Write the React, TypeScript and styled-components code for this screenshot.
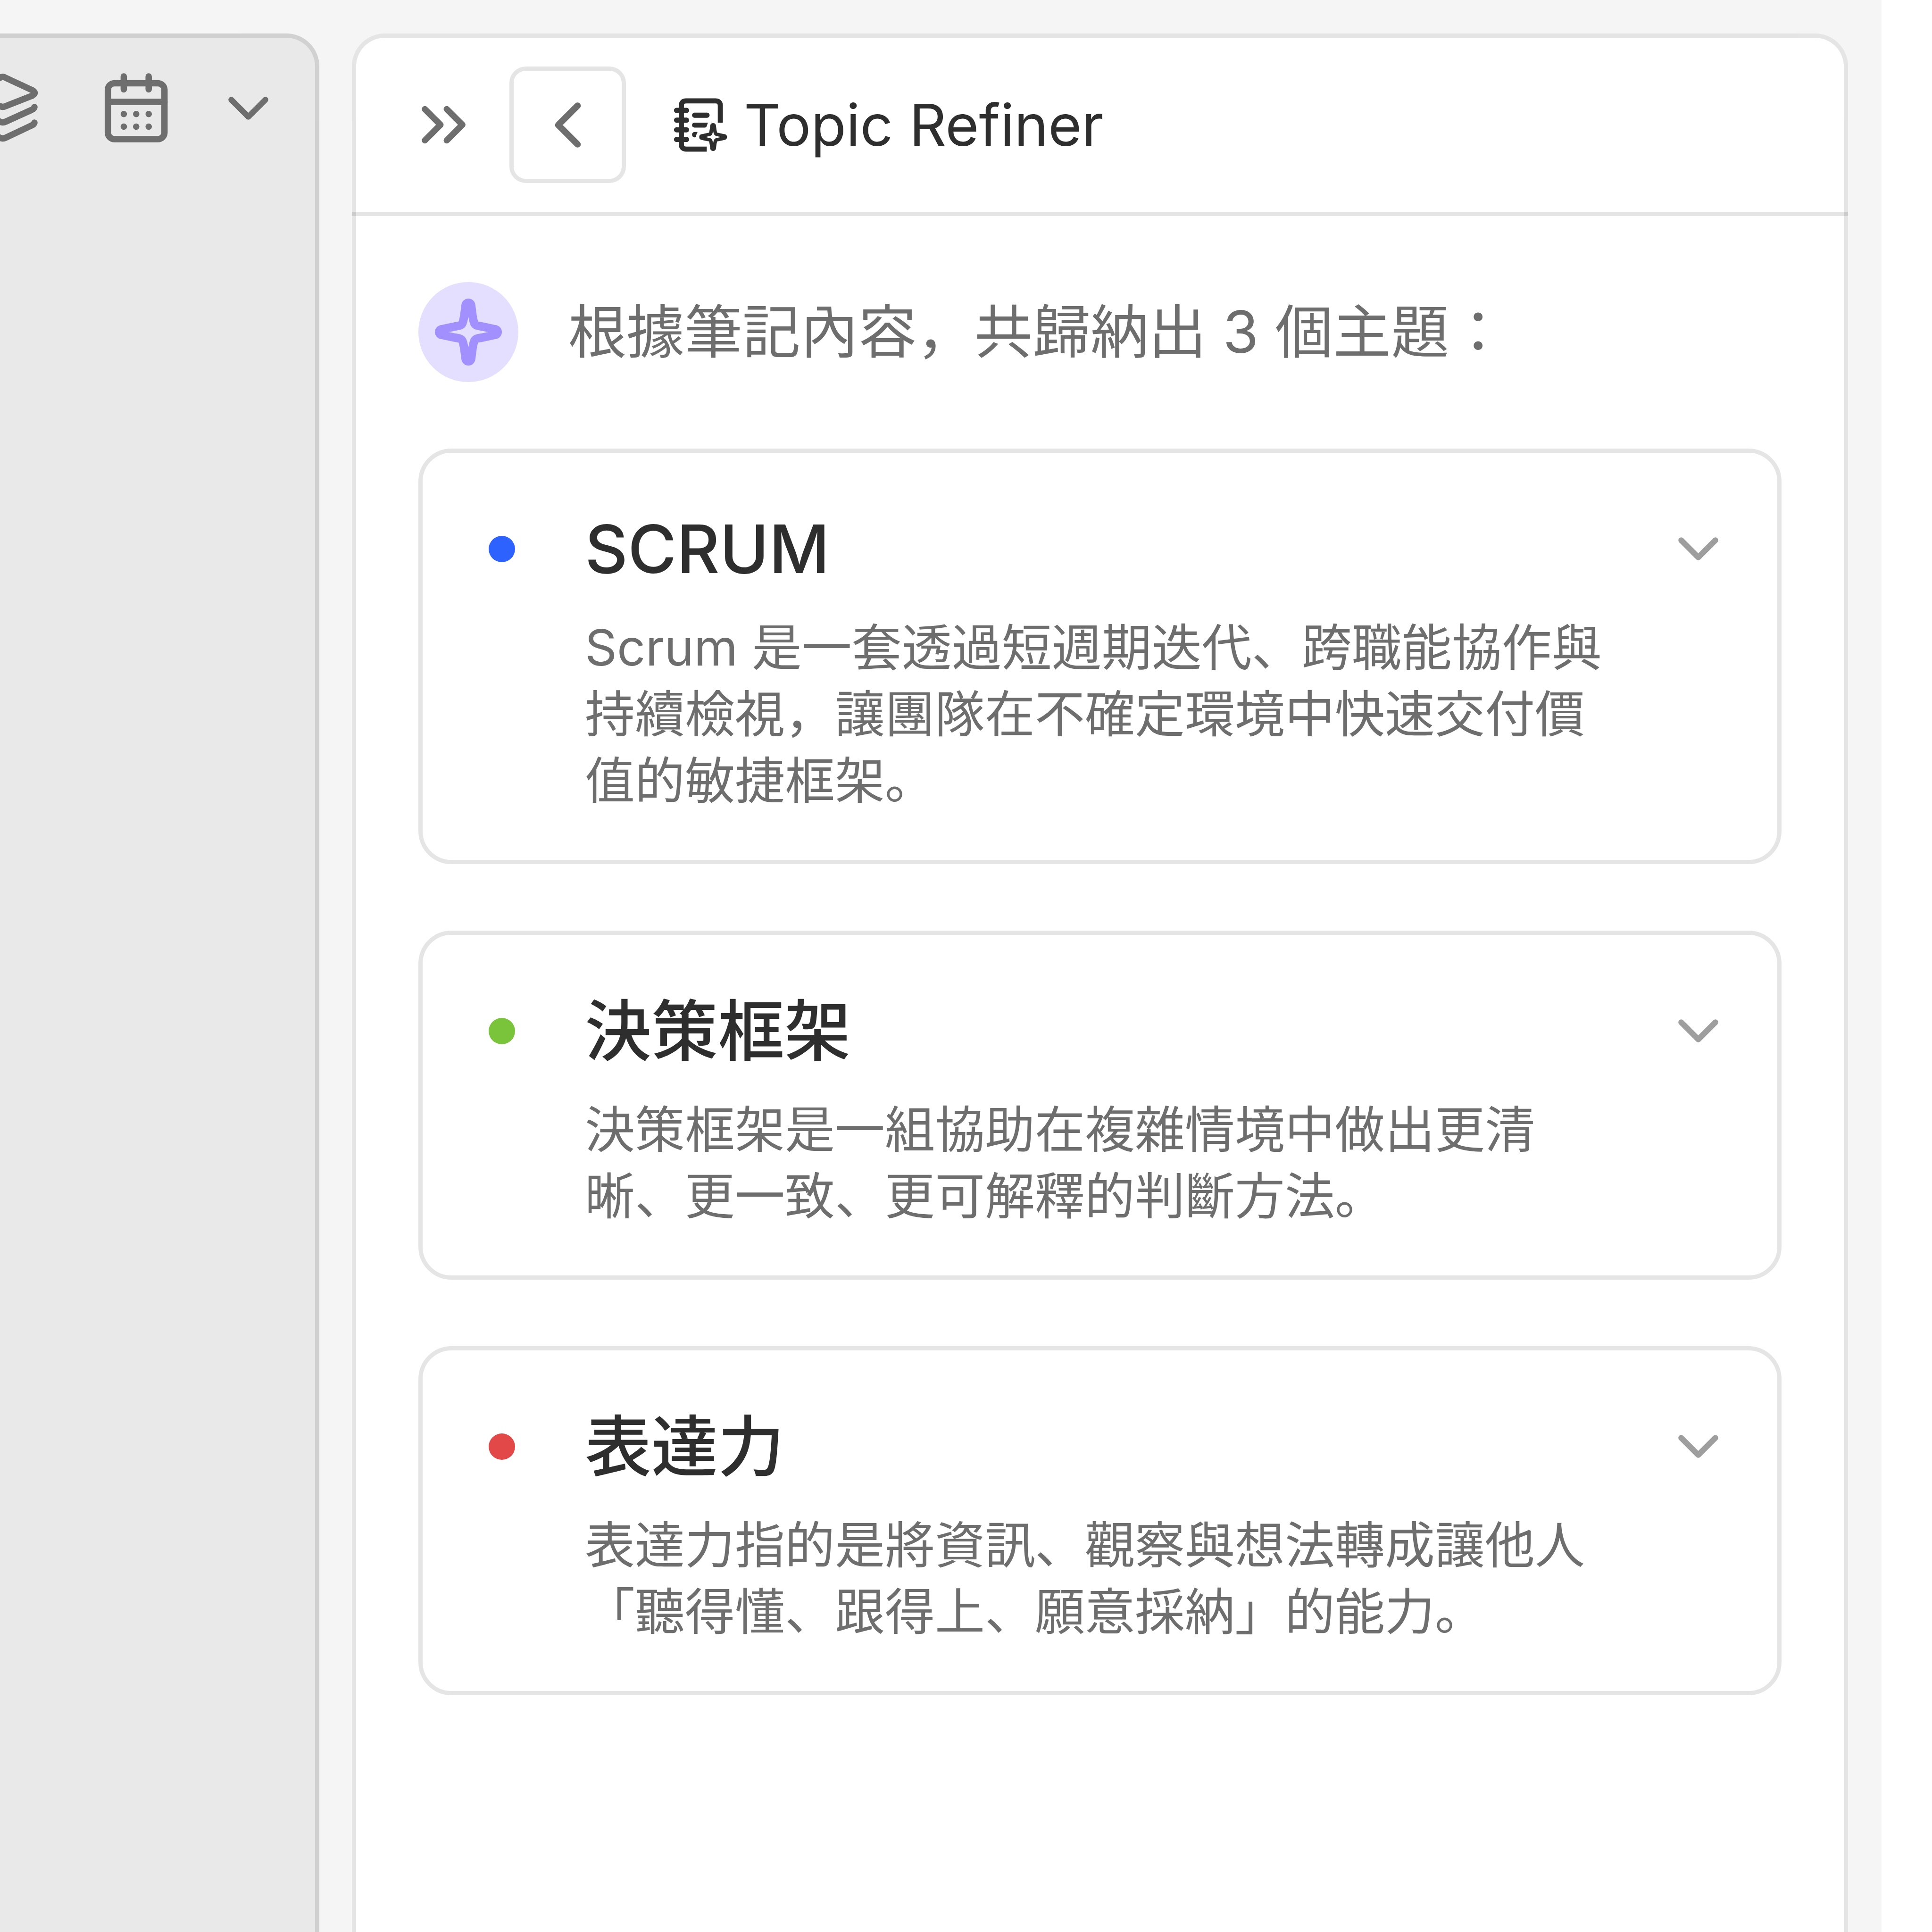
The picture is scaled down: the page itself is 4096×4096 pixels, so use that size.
import React from "react";
import styled, { createGlobalStyle } from "styled-components";
import { ChevronDown, ChevronLeft, ChevronsRight } from "lucide-react";

const LINE = "rgba(0, 0, 0, 0.1)";
const INK = "#2e2e2e";
const MUTED = "#6e6e6e";
const FAINT = "#9e9e9e";

const GlobalStyle = createGlobalStyle`
  *, *::before, *::after { box-sizing: border-box; }
  html, body, #root { height: 100%; }
  body {
    margin: 0;
    background: #ffffff;
    overflow: hidden;
    font-family: Inter, "Noto Sans CJK JP", sans-serif;
  }
  h1, h2, p, ul { margin: 0; padding: 0; }
  button {
    padding: 0;
    border: 0;
    background: none;
    color: inherit;
    cursor: pointer;
    flex: none;
  }
  svg { display: block; flex: none; }
`;

const Workspace = styled.div`
  display: flex;
  gap: 69px;
  height: 100%;
  margin-right: 107px;
  padding: 71px 71px 0 0;
  background: #f5f5f5;
`;

const Board = styled.section`
  flex: 0 0 677px;
  min-width: 0;
  overflow: hidden;
  border: 9px solid ${LINE};
  border-width: 9px 9px 0 0;
  border-top-right-radius: 70px;
  background: #e9e9e9;
  color: ${MUTED};
`;

const Toolbar = styled.div`
  display: flex;
  justify-content: flex-end;
  align-items: center;
  gap: 134px;
  padding: 75px 69px;
`;

const ToolGroup = styled.div`
  display: flex;
  align-items: center;
  gap: 92px;
`;

const Panel = styled.aside`
  flex: 1;
  min-width: 0;
  border: 9px solid ${LINE};
  border-bottom: 0;
  border-radius: 70px 70px 0 0;
  background: #ffffff;
`;

const PanelHeader = styled.header`
  display: flex;
  align-items: center;
  height: 378px;
  margin: 0 -9px;
  padding: 0 115px;
  border-bottom: 9px solid ${LINE};
  color: ${MUTED};
`;

const BackButton = styled.button`
  display: grid;
  place-items: center;
  width: 247px;
  height: 247px;
  margin: 0 98px 0 60px;
  border: 9px solid ${LINE};
  border-radius: 35px;
`;

const PanelTitle = styled.h1`
  display: flex;
  align-items: center;
  gap: 32px;
  color: ${INK};
  font-size: 122px;
  font-weight: 400;
  line-height: 176px;
`;

const PanelBody = styled.div`
  display: flex;
  flex-direction: column;
  gap: 141px;
  padding: 140px 132px;
`;

const Intro = styled.div`
  display: flex;
  align-items: center;
  gap: 106px;
  color: ${MUTED};
  font-size: 123px;
  line-height: 176px;
`;

const Avatar = styled.span`
  display: grid;
  flex: none;
  width: 212px;
  height: 212px;
  border-radius: 50%;
  background: #e4dfff;
`;

const TopicList = styled.ul`
  display: flex;
  flex-direction: column;
  gap: 141px;
  list-style: none;
`;

const TopicCard = styled.li`
  display: flex;
  align-items: flex-start;
  gap: 106px;
  padding: 98px 95px 98px 97px;
  border: 9px solid ${LINE};
  border-radius: 70px;
`;

const Marker = styled.span<{ $color: string }>`
  display: grid;
  flex: none;
  place-items: center;
  width: 141px;
  height: 211px;

  &::before {
    content: "";
    width: 56px;
    height: 56px;
    border-radius: 50%;
    background: ${(p) => p.$color};
  }
`;

const TopicText = styled.div`
  display: flex;
  flex: 1;
  flex-direction: column;
  gap: 33px;
  min-width: 0;
`;

const TopicName = styled.h2`
  color: ${INK};
  font-size: 141px;
  font-weight: 500;
  line-height: 211px;
`;

const TopicSummary = styled.p`
  color: ${MUTED};
  font-size: 106px;
  line-height: 141px;
`;

const ExpandButton = styled.button`
  display: grid;
  place-items: center;
  height: 211px;
  color: ${FAINT};
`;

const SPARK =
  "M-6 -56C-5 -64 5 -64 6 -56C8 -40 9 -26 13 -18C15 -14 20 -13 28 -12L56 -6C64 -5 64 5 56 6L28 12C20 13 15 14 13 18C9 26 8 40 6 56C5 64 -5 64 -6 56C-8 40 -9 26 -13 18C-15 14 -20 13 -28 12L-56 6C-64 5 -64 -5 -56 -6L-28 -12C-20 -13 -15 -14 -13 -18C-9 -26 -8 -40 -6 -56Z";

const LayersIcon = () => (
  <svg width="148" height="148" viewBox="0 0 148 148" fill="none" stroke="currentColor" strokeWidth="13.5" strokeLinecap="round" strokeLinejoin="round" aria-hidden="true">
    <path d="M68 10Q74 6 80 10L136 36Q147 42 136 48L80 70Q74 73 68 70L12 48Q1 42 12 36Z" />
    <path d="M7 72Q8 76 13 78L68 103Q74 106 80 103L135 78Q140 76 141 72" />
    <path d="M7 105Q8 109 13 111L68 137Q74 140 80 137L135 111Q140 109 141 105" />
  </svg>
);

const CalendarIcon = () => (
  <svg width="148" height="148" viewBox="0 0 148 148" fill="none" stroke="currentColor" strokeWidth="13.5" strokeLinecap="round" strokeLinejoin="round" aria-hidden="true">
    <rect x="14.7" y="21.5" width="120" height="118.5" rx="14" />
    <path d="M14.7 61H134.7M48.4 7V34.5M101.2 7V34.5" />
    <path d="M48.4 86.8h.1M74.7 86.8h.1M101.2 86.8h.1M48.4 113.6h.1M74.7 113.6h.1M101.2 113.6h.1" />
  </svg>
);

const NotebookSparkIcon = () => (
  <svg width="120" height="120" viewBox="150 160 376 376" fill="none" stroke="currentColor" strokeWidth="34" strokeLinejoin="round" aria-hidden="true">
    <path d="M380 508H243Q211 508 211 476V220Q211 188 243 188H438Q470 188 470 220V332" />
    <path strokeLinecap="round" d="M179 251H246M179 316H246M179 380H246M179 444H246M299 283H382" />
    <path fill="currentColor" stroke="none" d="M299 332H388L382 349Q379 365 368 365H299Q282 363 282 348Q283 334 299 332ZM299 394H320Q312 402 309 423Q304 430 299 430Q284 430 282 412Q283 396 299 394Z" />
    <path transform="translate(422 428) scale(1.3)" strokeWidth="18" d={SPARK} />
  </svg>
);

const SparkIcon = () => (
  <svg width="212" height="212" viewBox="-106 -106 212 212" fill="none" stroke="#a290ff" strokeWidth="18" strokeLinejoin="round" aria-hidden="true">
    <path d={SPARK} />
  </svg>
);

const topics = [
  {
    name: "SCRUM",
    color: "#2e62ff",
    summary: "Scrum 是一套透過短週期迭代、跨職能協作與持續檢視，讓團隊在不確定環境中快速交付價值的敏捷框架。",
  },
  {
    name: "決策框架",
    color: "#7ac43c",
    summary: "決策框架是一組協助在複雜情境中做出更清晰、更一致、更可解釋的判斷方法。",
  },
  {
    name: "表達力",
    color: "#e34848",
    summary: "表達力指的是將資訊、觀察與想法轉成讓他人「聽得懂、跟得上、願意採納」的能力。",
  },
];

export default function App() {
  return (
    <>
      <GlobalStyle />
      <Workspace>
        <Board>
          <Toolbar>
            <button type="button" aria-label="Layers"><LayersIcon /></button>
            <ToolGroup>
              <button type="button" aria-label="Calendar"><CalendarIcon /></button>
              <button type="button" aria-label="More"><ChevronDown size={145} /></button>
            </ToolGroup>
          </Toolbar>
        </Board>
        <Panel>
          <PanelHeader>
            <button type="button" aria-label="Collapse panel"><ChevronsRight size={159} /></button>
            <BackButton type="button" aria-label="Back"><ChevronLeft size={164} /></BackButton>
            <PanelTitle><NotebookSparkIcon />Topic Refiner</PanelTitle>
          </PanelHeader>
          <PanelBody>
            <Intro>
              <Avatar><SparkIcon /></Avatar>
              <p>根據筆記內容，共歸納出 3 個主題：</p>
            </Intro>
            <TopicList>
              {topics.map((t) => (
                <TopicCard key={t.name}>
                  <Marker $color={t.color} />
                  <TopicText>
                    <TopicName>{t.name}</TopicName>
                    <TopicSummary>{t.summary}</TopicSummary>
                  </TopicText>
                  <ExpandButton type="button" aria-label={`Expand ${t.name}`}><ChevronDown size={145} /></ExpandButton>
                </TopicCard>
              ))}
            </TopicList>
          </PanelBody>
        </Panel>
      </Workspace>
    </>
  );
}
